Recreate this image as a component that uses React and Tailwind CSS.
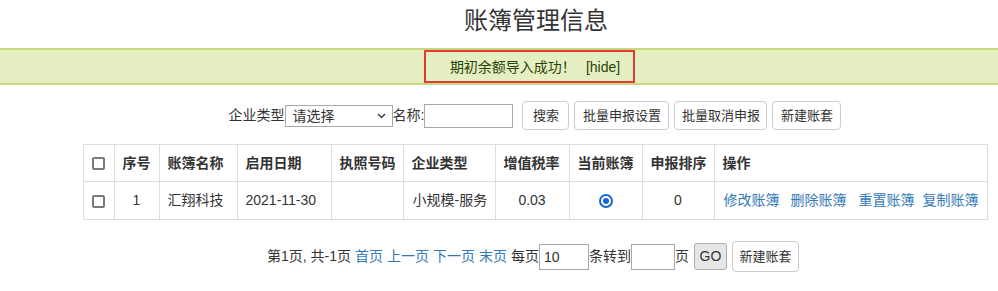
import React from 'react';

const font = { fontFamily: '"Liberation Sans", "Noto Sans CJK SC", sans-serif' };

const cols = [31, 45, 78, 94, 72, 92, 74, 73, 72, 273];
const heads = ['', '序号', '账簿名称', '启用日期', '执照号码', '企业类型', '增值税率', '当前账簿', '申报排序', '操作'];

function Btn({ children, w }) {
  return (
    <button className={`h-[29px] ${w} border border-[#ccc] rounded-[4px] bg-white text-[13px] text-[#333] leading-none`}>
      {children}
    </button>
  );
}

function Check() {
  return <span className="inline-block w-[13px] h-[13px] border-2 border-[#7a7a7a] rounded-[2px] bg-white align-middle" />;
}

export default function App() {
  return (
    <div className="w-[998px] h-[291px] bg-white text-[#333] text-[14px] overflow-hidden" style={font}>
      {/* title */}
      <div className="pl-[74px] h-[48px] pt-[7px] text-center">
        <h3 className="text-[24px] leading-[28px] text-[#333]">账簿管理信息</h3>
      </div>

      {/* success message */}
      <div className="h-[37px] border-y-2 border-[#c6d880] bg-[#e6efc2] text-[#264409] pl-[74px] flex justify-center">
        <div className="h-[33px] mr-[13px] border-2 border-[#e53935] pl-[24px] pr-[13px] flex items-center leading-none">
          <span>期初余额导入成功！</span>
          <span className="ml-[10px]">[hide]</span>
        </div>
      </div>

      {/* toolbar */}
      <div className="pl-[72px] mt-[15px] flex justify-center items-center h-[31px]">
        <span>企业类型</span>
        <div className="w-[108px] h-[22px] border border-[#a9a9a9] flex items-center justify-between pl-[7px] pr-[6px] bg-white">
          <span className="leading-none">请选择</span>
          <svg width="9" height="6" viewBox="0 0 9 6" fill="none">
            <path d="M1 1l3.5 3.5L8 1" stroke="#333" strokeWidth="1.3" />
          </svg>
        </div>
        <span>名称:</span>
        <input className="w-[89px] h-[24px] border border-[#a9a9a9] outline-none" readOnly />
        <div className="ml-[9px] flex gap-[5px]">
          <Btn w="w-[47px]">搜索</Btn>
          <Btn w="w-[95px]">批量申报设置</Btn>
          <Btn w="w-[93px]">批量取消申报</Btn>
          <Btn w="w-[69px]">新建账套</Btn>
        </div>
      </div>

      {/* table */}
      <div className="pl-[72px] mt-[13px] flex justify-center">
        <table className="table-fixed border-collapse w-[904px]">
          <colgroup>
            {cols.map((w, i) => (
              <col key={i} style={{ width: w }} />
            ))}
          </colgroup>
          <thead>
            <tr className="h-[37px]">
              {heads.map((h, i) => (
                <th key={i} className={`border border-[#ddd] font-bold whitespace-nowrap ${i === 0 ? 'text-center' : 'text-left pl-[8px]'}`}>
                  {i === 0 ? <Check /> : h}
                </th>
              ))}
            </tr>
          </thead>
          <tbody>
            <tr className="h-[38px]">
              <td className="border border-[#ddd] text-center">
                <Check />
              </td>
              <td className="border border-[#ddd] text-center">1</td>
              <td className="border border-[#ddd] pl-[8px]">汇翔科技</td>
              <td className="border border-[#ddd] pl-[8px]">2021-11-30</td>
              <td className="border border-[#ddd]"></td>
              <td className="border border-[#ddd] pl-[9px] whitespace-nowrap">小规模-服务</td>
              <td className="border border-[#ddd] text-center">0.03</td>
              <td className="border border-[#ddd]">
                <div className="flex justify-center">
                  <span className="w-[14px] h-[14px] rounded-full border-2 border-[#1a66d9] flex items-center justify-center">
                    <span className="w-[6px] h-[6px] rounded-full bg-[#1a66d9]" />
                  </span>
                </div>
              </td>
              <td className="border border-[#ddd] text-center">0</td>
              <td className="border border-[#ddd] pl-[9px] whitespace-nowrap text-[#337ab7]">
                <a className="mr-[11px]">修改账簿</a>
                <a className="mr-[12px]">删除账簿</a>
                <a className="mr-[8px]">重置账簿</a>
                <a>复制账簿</a>
              </td>
            </tr>
          </tbody>
        </table>
      </div>

      {/* pagination */}
      <div className="pl-[68px] mt-[21px] flex justify-center items-center">
        <span>第1页, 共-1页</span>
        <a className="ml-[4px] text-[#337ab7]">首页</a>
        <a className="ml-[4px] text-[#337ab7]">上一页</a>
        <a className="ml-[4px] text-[#337ab7]">下一页</a>
        <a className="ml-[4px] text-[#337ab7]">末页</a>
        <span className="ml-[4px]">每页</span>
        <input className="w-[50px] h-[26px] border border-[#a9a9a9] px-[4px] outline-none" defaultValue="10" />
        <span>条转到</span>
        <input className="w-[44px] h-[26px] border border-[#a9a9a9] outline-none" readOnly />
        <span>页</span>
        <button className="ml-[5px] w-[33px] h-[27px] border border-[#adadad] rounded-[3px] bg-[#e6e6e6] text-[#333]">GO</button>
        <button className="ml-[5px] w-[67px] h-[31px] border border-[#ccc] rounded-[4px] bg-white text-[13px] text-[#333]">新建账套</button>
      </div>
    </div>
  );
}
